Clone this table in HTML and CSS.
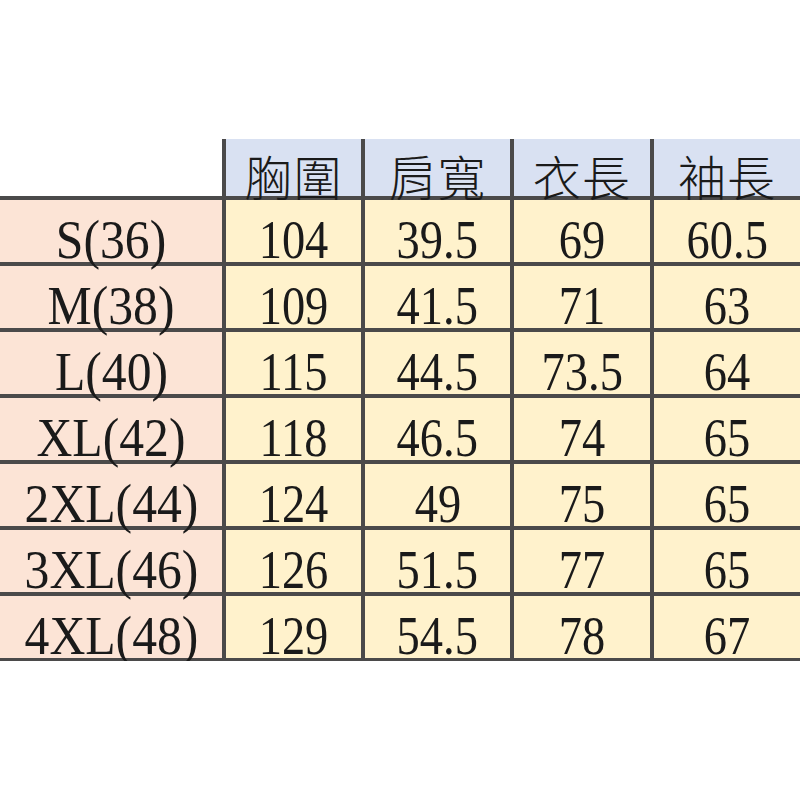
FILE: index.html
```html
<!DOCTYPE html>
<html lang="zh-Hant">
<head>
<meta charset="utf-8">
<title>尺寸表</title>
<link rel="stylesheet" href="styles.css">
</head>
<body>
<div class="page">
  <div class="sheet">
    <div class="cell corner"></div>
    <div class="cell head"><span>胸圍</span></div>
    <div class="cell head"><span>肩寬</span></div>
    <div class="cell head"><span>衣長</span></div>
    <div class="cell head"><span>袖長</span></div>

    <div class="cell size"><span>S(36)</span></div>
    <div class="cell val"><span>104</span></div>
    <div class="cell val"><span>39.5</span></div>
    <div class="cell val"><span>69</span></div>
    <div class="cell val"><span>60.5</span></div>

    <div class="cell size"><span>M(38)</span></div>
    <div class="cell val"><span>109</span></div>
    <div class="cell val"><span>41.5</span></div>
    <div class="cell val"><span>71</span></div>
    <div class="cell val"><span>63</span></div>

    <div class="cell size"><span>L(40)</span></div>
    <div class="cell val"><span>115</span></div>
    <div class="cell val"><span>44.5</span></div>
    <div class="cell val"><span>73.5</span></div>
    <div class="cell val"><span>64</span></div>

    <div class="cell size"><span>XL(42)</span></div>
    <div class="cell val"><span>118</span></div>
    <div class="cell val"><span>46.5</span></div>
    <div class="cell val"><span>74</span></div>
    <div class="cell val"><span>65</span></div>

    <div class="cell size"><span>2XL(44)</span></div>
    <div class="cell val"><span>124</span></div>
    <div class="cell val"><span>49</span></div>
    <div class="cell val"><span>75</span></div>
    <div class="cell val"><span>65</span></div>

    <div class="cell size"><span>3XL(46)</span></div>
    <div class="cell val"><span>126</span></div>
    <div class="cell val"><span>51.5</span></div>
    <div class="cell val"><span>77</span></div>
    <div class="cell val"><span>65</span></div>

    <div class="cell size"><span>4XL(48)</span></div>
    <div class="cell val"><span>129</span></div>
    <div class="cell val"><span>54.5</span></div>
    <div class="cell val"><span>78</span></div>
    <div class="cell val"><span>67</span></div>
  </div>
</div>
</body>
</html>
```

FILE: styles.css
```css
html, body {
  margin: 0;
  padding: 0;
  background: #ffffff;
}

.page {
  padding-top: 139px;
  width: 800px;
}

.sheet {
  display: grid;
  grid-template-columns: 222px 135px 145px 136px 146px;
  grid-template-rows: 57px repeat(7, 62px);
  gap: 4px;
  padding-bottom: 3px;
  background: #4b4a4a;
  color: #1a1a1a;
  font-family: "Liberation Serif", "Noto Sans CJK TC", serif;
}

.cell {
  text-align: center;
  overflow: visible;
  white-space: nowrap;
}

.cell span {
  display: inline-block;
}

.corner {
  background: #ffffff;
}

.head {
  background: #d9e1f2;
  font-family: "Noto Sans CJK TC", sans-serif;
  font-weight: 300;
  font-size: 48px;
  line-height: 40px;
  padding-top: 16px;
  letter-spacing: 1px;
}

.size {
  background: #fce4d6;
  font-size: 54px;
  line-height: 44px;
  padding-top: 18px;
}

.size span {
  transform: scaleX(0.92);
}

.val {
  background: #fff2cc;
  font-size: 54px;
  line-height: 44px;
  padding-top: 18px;
}

.val span {
  transform: scaleX(0.86);
}
```
